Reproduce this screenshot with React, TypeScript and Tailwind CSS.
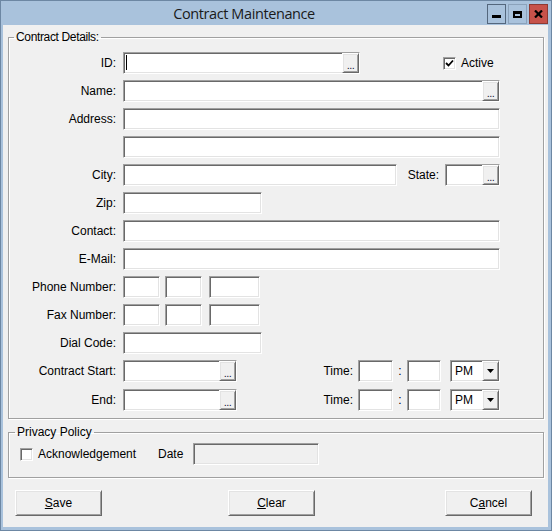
import React from 'react';

const sunken =
  'border border-t-[#a0a0a0] border-l-[#a0a0a0] border-r-white border-b-white shadow-[inset_1px_1px_0_#696969,inset_-1px_-1px_0_#e3e3e3]';
const raised =
  'border border-t-white border-l-white border-r-[#696969] border-b-[#696969] shadow-[inset_1px_1px_0_#e3e3e3,inset_-1px_-1px_0_#a0a0a0]';

function TextBox({ width, children, disabled }: { width: string; children?: React.ReactNode; disabled?: boolean }) {
  return (
    <div className={`${width} h-[22px] flex shrink-0 ${sunken} ${disabled ? 'bg-[#f0f0f0]' : 'bg-white'}`}>
      {children}
    </div>
  );
}

function Ellipsis() {
  return (
    <div className={`ml-auto w-[17px] h-full bg-[#f0f0f0] flex items-end justify-center pb-[2px] ${raised}`}>
      <span className="text-[11px] leading-[10px] tracking-[-0.5px] text-[#202040]">...</span>
    </div>
  );
}

function CheckBox({ checked }: { checked?: boolean }) {
  return (
    <div className={`w-[13px] h-[13px] shrink-0 bg-white flex items-center justify-center ${sunken}`}>
      {checked && (
        <svg width="9" height="9" viewBox="0 0 9 9">
          <path d="M1 4 L3.5 6.5 L8 1.5" stroke="#000" strokeWidth="1.8" fill="none" />
        </svg>
      )}
    </div>
  );
}

function Combo({ value }: { value: string }) {
  return (
    <div className={`w-[50px] h-[22px] flex shrink-0 bg-white ${sunken}`}>
      <span className="pl-[4px] leading-[20px]">{value}</span>
      <div className={`ml-auto w-[17px] h-full bg-[#f0f0f0] flex items-center justify-center ${raised}`}>
        <svg width="7" height="4" viewBox="0 0 7 4">
          <path d="M0 0 H7 L3.5 4 Z" fill="#000" />
        </svg>
      </div>
    </div>
  );
}

function Row({ label, children }: { label?: string; children?: React.ReactNode }) {
  return (
    <div className="flex items-center h-[22px]">
      <span className="w-[107px] mr-[7px] text-right shrink-0">{label}</span>
      {children}
    </div>
  );
}

function WinButton({ children }: { children: React.ReactNode }) {
  return (
    <button className={`w-[87px] h-[26px] bg-[#f0f0f0] flex items-center justify-center ${raised}`}>
      {children}
    </button>
  );
}

export default function App() {
  return (
    <div
      className="w-[552px] h-[531px] bg-[#a9c2dc] border border-[#6d87a3] flex flex-col text-[12px] text-black"
      style={{ fontFamily: '"Liberation Sans", Arial, sans-serif' }}
    >
      {/* Title bar */}
      <div className="h-[24px] flex items-center shrink-0">
        <div
          className="flex-1 text-center text-[14.5px] tracking-[-0.4px] text-[#1a1a1a] pt-[1px]"
          style={{ fontFamily: '"Open Sans", "Noto Sans", sans-serif' }}
        >
          Contract Maintenance
        </div>
        <div className="flex gap-[2px] mr-[3px] mt-[2px]">
          <div className="w-[19px] h-[20px] border border-[#54677d] flex items-end justify-center pb-[5px]">
            <div className="w-[9px] h-[3px] bg-black" />
          </div>
          <div className="w-[19px] h-[20px] border border-[#8ba2bb] flex items-center justify-center">
            <div className="w-[9px] h-[7px] border-2 border-t-[3px] border-black" />
          </div>
          <div className="w-[19px] h-[20px] bg-[#c7524a] border border-[#8e3a33] flex items-center justify-center">
            <svg width="9" height="8" viewBox="0 0 9 8">
              <path d="M1 0.5 L8 7.5 M8 0.5 L1 7.5" stroke="#000" strokeWidth="2.2" />
            </svg>
          </div>
        </div>
      </div>

      {/* Client area */}
      <div className="flex-1 ml-[2px] mr-[3px] mb-[3px] bg-[#f0f0f0] flex flex-col pt-[5px]">
        <fieldset className="ml-[5px] mr-[4px] border border-[#a0a0a0] shadow-[inset_1px_1px_0_white,1px_1px_0_white] pb-[7px]">
          <legend className="ml-[5px] px-[2px] leading-[14px] tracking-[-0.35px]">Contract Details:</legend>
          <div className="mt-[8px] flex flex-col gap-[6px]">
            <Row label="ID:">
              <TextBox width="w-[237px]">
                <span className="ml-[2px] mt-[2px] w-px h-[15px] bg-black" />
                <Ellipsis />
              </TextBox>
              <div className="ml-[83px]">
                <CheckBox checked />
              </div>
              <span className="ml-[5px]">Active</span>
            </Row>
            <Row label="Name:">
              <TextBox width="w-[377px]">
                <Ellipsis />
              </TextBox>
            </Row>
            <Row label="Address:">
              <TextBox width="w-[377px]" />
            </Row>
            <Row>
              <TextBox width="w-[377px]" />
            </Row>
            <Row label="City:">
              <TextBox width="w-[274px]" />
              <span className="w-[48px] text-right pr-[6px] shrink-0">State:</span>
              <TextBox width="w-[55px]">
                <Ellipsis />
              </TextBox>
            </Row>
            <Row label="Zip:">
              <TextBox width="w-[139px]" />
            </Row>
            <Row label="Contact:">
              <TextBox width="w-[377px]" />
            </Row>
            <Row label="E-Mail:">
              <TextBox width="w-[377px]" />
            </Row>
            <Row label="Phone Number:">
              <TextBox width="w-[37px]" />
              <div className="ml-[5px]">
                <TextBox width="w-[37px]" />
              </div>
              <div className="ml-[7px]">
                <TextBox width="w-[51px]" />
              </div>
            </Row>
            <Row label="Fax Number:">
              <TextBox width="w-[37px]" />
              <div className="ml-[5px]">
                <TextBox width="w-[37px]" />
              </div>
              <div className="ml-[7px]">
                <TextBox width="w-[51px]" />
              </div>
            </Row>
            <Row label="Dial Code:">
              <TextBox width="w-[139px]" />
            </Row>
            {['Contract Start:', 'End:'].map((label, i) => (
              <div key={label} className={i === 1 ? 'mt-[1px]' : ''}>
                <Row label={label}>
                  <TextBox width="w-[114px]">
                    <Ellipsis />
                  </TextBox>
                  <span className="w-[121px] text-right pr-[5px] shrink-0">Time:</span>
                  <TextBox width="w-[35px]" />
                  <span className="w-[14px] text-center shrink-0">:</span>
                  <TextBox width="w-[34px]" />
                  <div className="ml-[9px]">
                    <Combo value="PM" />
                  </div>
                </Row>
              </div>
            ))}
          </div>
        </fieldset>

        <fieldset className="mt-[6px] ml-[5px] mr-[4px] border border-[#a0a0a0] shadow-[inset_1px_1px_0_white,1px_1px_0_white] pb-[12px]">
          <legend className="ml-[6px] px-[2px] leading-[14px]">Privacy Policy</legend>
          <div className="mt-[4px] flex items-center h-[22px]">
            <div className="ml-[11px]">
              <CheckBox />
            </div>
            <span className="ml-[5px] w-[120px] shrink-0">Acknowledgement</span>
            <span className="w-[35px] shrink-0">Date</span>
            <TextBox width="w-[126px]" disabled />
          </div>
        </fieldset>

        <div className="mt-[12px] flex ml-[12px]">
          <WinButton>
            <span>
              <u>S</u>ave
            </span>
          </WinButton>
          <div className="ml-[126px]">
            <WinButton>
              <span>
                <u>C</u>lear
              </span>
            </WinButton>
          </div>
          <div className="ml-[130px]">
            <WinButton>
              <span>
                C<u>a</u>ncel
              </span>
            </WinButton>
          </div>
        </div>
      </div>
    </div>
  );
}
